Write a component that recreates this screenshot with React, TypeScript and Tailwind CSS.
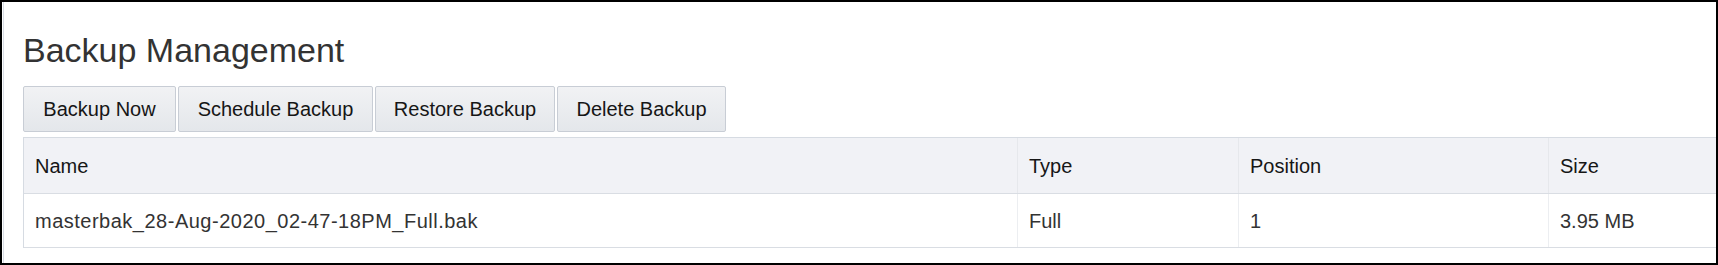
import React from "react";

const buttons = [
  { label: "Backup Now", w: "w-[153px]" },
  { label: "Schedule Backup", w: "w-[195px]" },
  { label: "Restore Backup", w: "w-[180px]" },
  { label: "Delete Backup", w: "w-[169px]" },
];

export default function App() {
  return (
    <div className="w-[1718px] h-[265px] border-2 border-black bg-white overflow-hidden font-['Liberation_Sans',Arial,sans-serif]">
      <div className="h-full ml-px border-l border-[#d8dde5] pl-[19px] pt-[28px]">
        <h1 className="text-[34px] leading-[40px] h-[40px] text-[#333333] font-normal">Backup Management</h1>
        <div className="mt-[16px] flex gap-[2px]">
          {buttons.map((b) => (
            <button
              key={b.label}
              className={`${b.w} h-[46px] border border-[#c8cdd5] rounded-[2px] bg-gradient-to-b from-[#f1f2f4] to-[#e4e7eb] text-[20px] leading-[24px] text-[#161616] text-center`}
            >
              {b.label}
            </button>
          ))}
        </div>
        <div className="mt-[5px] w-[1760px] border-l border-t border-[#d6dbe2]">
          <div className="grid grid-cols-[993px_221px_310px_1fr] h-[56px] bg-[#f1f2f6] border-b border-[#d9dde3] text-[20px] text-[#161616]">
            <div className="flex items-center pl-[11px]">Name</div>
            <div className="flex items-center pl-[11px] border-l border-[#e6e8ec]">Type</div>
            <div className="flex items-center pl-[11px] border-l border-[#e6e8ec]">Position</div>
            <div className="flex items-center pl-[11px] border-l border-[#e6e8ec]">Size</div>
          </div>
          <div className="grid grid-cols-[993px_221px_310px_1fr] h-[54px] bg-white border-b border-[#d9dde3] text-[20px] text-[#333333]">
            <div className="flex items-center pl-[11px] tracking-[0.5px]">masterbak_28-Aug-2020_02-47-18PM_Full.bak</div>
            <div className="flex items-center pl-[11px] border-l border-[#eceef1]">Full</div>
            <div className="flex items-center pl-[11px] border-l border-[#eceef1]">1</div>
            <div className="flex items-center pl-[11px] border-l border-[#eceef1]">3.95 MB</div>
          </div>
        </div>
      </div>
    </div>
  );
}
